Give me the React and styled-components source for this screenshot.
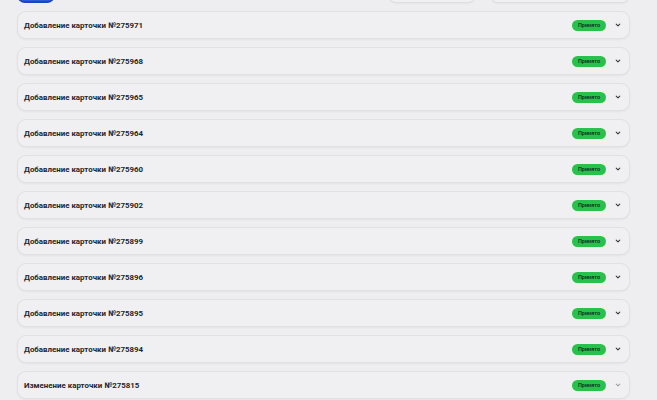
import React from "react";
import styled, { createGlobalStyle } from "styled-components";

const GlobalStyle = createGlobalStyle`
  body {
    margin: 0;
    background: #eeeef1;
    font-family: Roboto, "Noto Sans", sans-serif;
  }
`;

const Page = styled.div`
  padding: 0 27px 0 17px;
  height: 400px;
  overflow: hidden;
`;

const Header = styled.div`
  display: flex;
  align-items: flex-end;
  height: 30px;
  margin-top: -27px;
  margin-bottom: 8px;
`;

const Tab = styled.div`
  width: 38px;
  height: 30px;
  border-radius: 8px;
  background: #2f5bd8;
  border-bottom: 2px solid #1e45c0;
  box-sizing: border-box;
`;

const Filters = styled.div`
  display: flex;
  gap: 14px;
  margin-left: auto;
  height: 29px;
`;

const Filter = styled.div`
  width: ${(p) => p.$w}px;
  border: 1px solid #dedee2;
  border-radius: 8px;
  background: #f0f0f2;
  box-shadow: 0 1px 2px rgba(0, 0, 0, 0.04);
`;

const List = styled.div`
  display: flex;
  flex-direction: column;
  gap: 8px;
`;

const Card = styled.div`
  display: flex;
  align-items: center;
  height: 28px;
  box-sizing: border-box;
  padding: 0 8px 0 6px;
  border: 1px solid #e1e1e5;
  border-radius: 9px;
  background: #f0f0f2;
  box-shadow: 0 1px 2px rgba(0, 0, 0, 0.05);
`;

const Title = styled.div`
  flex: 1;
  font-size: 7.9px;
  font-weight: 700;
  color: #26262b;
`;

const Badge = styled.span`
  display: inline-flex;
  align-items: center;
  justify-content: center;
  width: 34px;
  height: 11px;
  border-radius: 6px;
  background: #27c24c;
  color: #113b1c;
  font-size: 5.5px;
  font-weight: 700;
`;

const Chevron = styled.svg`
  width: 6px;
  height: 6px;
  margin-left: 9px;
  color: ${(p) => (p.$muted ? "#a0a0a6" : "#3a3a40")};
`;

const items = [
  "Добавление карточки №275971",
  "Добавление карточки №275968",
  "Добавление карточки №275965",
  "Добавление карточки №275964",
  "Добавление карточки №275960",
  "Добавление карточки №275902",
  "Добавление карточки №275899",
  "Добавление карточки №275896",
  "Добавление карточки №275895",
  "Добавление карточки №275894",
  "Изменение карточки №275815",
];

export default function App() {
  return (
    <>
      <GlobalStyle />
      <Page>
        <Header>
          <Tab />
          <Filters>
            <Filter $w={86} />
            <Filter $w={138} />
          </Filters>
        </Header>
        <List>
          {items.map((title, i) => (
            <Card key={title}>
              <Title>{title}</Title>
              <Badge>Принято</Badge>
              <Chevron viewBox="0 0 10 10" $muted={i === items.length - 1}>
                <path
                  d="M2 3.5 L5 6.5 L8 3.5"
                  fill="none"
                  stroke="currentColor"
                  strokeWidth="1.8"
                  strokeLinecap="round"
                  strokeLinejoin="round"
                />
              </Chevron>
            </Card>
          ))}
        </List>
      </Page>
    </>
  );
}
